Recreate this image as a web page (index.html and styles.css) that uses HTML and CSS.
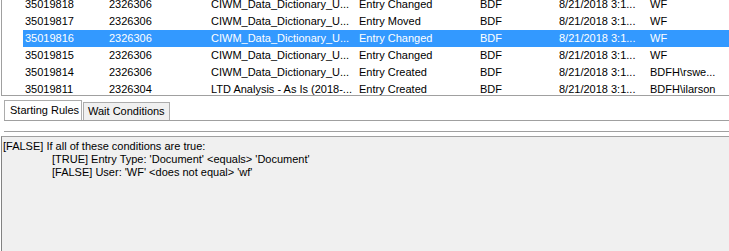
FILE: index.html
```html
<!DOCTYPE html>
<html lang="en">
<head>
  <meta charset="UTF-8" />
  <title>Workflow Rules</title>
  <link rel="stylesheet" href="styles.css">
</head>
<body>
  <div class="list">
    <div class="rows">
      <div class="row"><span>35019818</span><span>2326306</span><span>CIWM_Data_Dictionary_U...</span><span>Entry Changed</span><span>BDF</span><span>8/21/2018 3:1...</span><span>WF</span></div>
      <div class="row"><span>35019817</span><span>2326306</span><span>CIWM_Data_Dictionary_U...</span><span>Entry Moved</span><span>BDF</span><span>8/21/2018 3:1...</span><span>WF</span></div>
      <div class="row selected"><span>35019816</span><span>2326306</span><span>CIWM_Data_Dictionary_U...</span><span>Entry Changed</span><span>BDF</span><span>8/21/2018 3:1...</span><span>WF</span></div>
      <div class="row"><span>35019815</span><span>2326306</span><span>CIWM_Data_Dictionary_U...</span><span>Entry Changed</span><span>BDF</span><span>8/21/2018 3:1...</span><span>WF</span></div>
      <div class="row"><span>35019814</span><span>2326306</span><span>CIWM_Data_Dictionary_U...</span><span>Entry Created</span><span>BDF</span><span>8/21/2018 3:1...</span><span>BDFH\rswe...</span></div>
      <div class="row"><span>35019811</span><span>2326304</span><span>LTD Analysis - As Is (2018-...</span><span>Entry Created</span><span>BDF</span><span>8/21/2018 3:1...</span><span>BDFH\ilarson</span></div>
    </div>
  </div>

  <div class="tabs">
    <div class="tab-strip">
      <div class="tab active">Starting Rules</div>
      <div class="tab">Wait Conditions</div>
      <div class="tab-fill"></div>
    </div>
    <div class="tab-page"></div>
  </div>

  <div class="rules">
    <div class="rule">[FALSE] If all of these conditions are true:</div>
    <div class="rule sub">[TRUE] Entry Type: 'Document' &lt;equals&gt; 'Document'</div>
    <div class="rule sub">[FALSE] User: 'WF' &lt;does not equal&gt; 'wf'</div>
  </div>
</body>
</html>
```

FILE: styles.css
```css
html, body {
  height: 100%;
}
body {
  margin: 0;
  background: #fff;
  color: #000;
  font-family: "Liberation Sans", Arial, sans-serif;
  font-size: 11px;
  overflow: hidden;
  display: flex;
  flex-direction: column;
}
.list {
  height: 95px;
  margin-left: 1px;
  border-left: 1px solid #a0a0a0;
  border-bottom: 1px solid #a0a0a0;
  overflow: hidden;
  flex: none;
}
.rows {
  margin-top: -4px;
}
.row {
  display: grid;
  grid-template-columns: 84px 102px 148px 121px 79px 91px 76px;
  height: 17px;
  line-height: 17px;
  margin-left: 21px;
  white-space: nowrap;
}
.row span {
  padding-left: 2px;
  overflow: hidden;
}
.row.selected {
  background: #3399ff;
  color: #fff;
}
.tabs {
  flex: none;
  padding: 4px 0 0 4px;
}
.tab-strip {
  display: flex;
  align-items: flex-end;
  height: 20px;
}
.tab {
  box-sizing: border-box;
  height: 18px;
  line-height: 17px;
  padding: 0 4px;
  border: 1px solid #acacac;
  border-bottom: none;
  background: #f0f0f0;
  white-space: nowrap;
}
.tab.active {
  height: 20px;
  line-height: 19px;
  width: 78px;
  padding-left: 5px;
  background: #fff;
  margin-right: 1px;
}
.tab-fill {
  flex: 1;
}
.tab-page {
  height: 10px;
  border-top: 1px solid #a0a0a0;
  border-bottom: 1px solid #a0a0a0;
}
.rules {
  flex: 1;
  margin: 4px 0 0 1px;
  padding: 3px 0 0 1px;
  border-top: 1px solid #a0a0a0;
  border-left: 1px solid #828282;
  background: #f0f0f0;
}
.rule {
  height: 13px;
  line-height: 13px;
  white-space: nowrap;
}
.rule.sub {
  padding-left: 49px;
}
```
